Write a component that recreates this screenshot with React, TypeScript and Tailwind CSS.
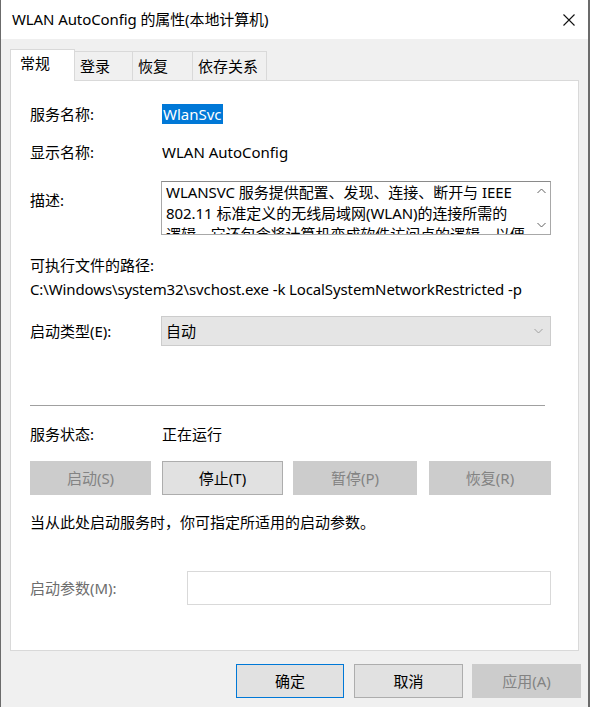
import React from "react";

const FONT = '"Noto Sans", "Noto Sans CJK SC", sans-serif';

function Chevron({ up, className }: { up?: boolean; className?: string }) {
  return (
    <svg width="9" height="6" viewBox="0 0 9 6" className={className}>
      <path
        d={up ? "M0.5 5 L4.5 1 L8.5 5" : "M0.5 1 L4.5 5 L8.5 1"}
        fill="none"
        stroke="currentColor"
        strokeWidth="1"
      />
    </svg>
  );
}

function Tab({ label, active, w }: { label: string; active?: boolean; w: string }) {
  if (active) {
    return (
      <div
        className={`${w} h-[32px] -mb-px relative z-10 bg-white border border-b-0 border-[#d9d9d9] pl-[9px] pb-[4px] flex items-center text-[15px]`}
      >
        {label}
      </div>
    );
  }
  return (
    <div
      className={`${w} h-[29px] bg-[#f0f0f0] border border-l-0 border-b-0 border-[#d9d9d9] pl-[5px] flex items-center text-[15px]`}
    >
      {label}
    </div>
  );
}

function SvcButton({
  label,
  disabled,
  className,
}: {
  label: string;
  disabled?: boolean;
  className: string;
}) {
  return (
    <div
      className={`${className} h-[34px] flex items-center justify-center text-[15px] border ${
        disabled
          ? "bg-[#cccccc] border-[#cccccc] text-[#838383]"
          : "bg-[#e1e1e1] border-[#adadad] text-black"
      }`}
    >
      {label}
    </div>
  );
}

export default function App() {
  return (
    <div
      className="w-[590px] h-[707px] bg-[#f0f0f0] border-l border-r-2 border-[#6b6b6b] flex flex-col text-black overflow-hidden"
      style={{ fontFamily: FONT }}
    >
      {/* title bar */}
      <div className="h-[39px] shrink-0 bg-white flex items-center justify-between pl-[11px] pr-[13px]">
        <span className="text-[15px] leading-none tracking-[-0.1px]">WLAN AutoConfig 的属性(本地计算机)</span>
        <svg width="12" height="12" viewBox="0 0 12 12">
          <path d="M0.5 0.5 L11.5 11.5 M11.5 0.5 L0.5 11.5" stroke="#111" strokeWidth="1.1" />
        </svg>
      </div>

      {/* tabs */}
      <div className="pl-[9px] pt-[10px] flex items-end">
        <Tab label="常规" active w="w-[65px]" />
        <Tab label="登录" w="w-[58px]" />
        <Tab label="恢复" w="w-[60px]" />
        <Tab label="依存关系" w="w-[74px]" />
      </div>

      {/* general page */}
      <div className="ml-[9px] mr-[9px] h-[571px] bg-white border border-[#d9d9d9] pl-[19px] pr-[26px] text-[15px] flex flex-col">
        <div className="mt-[21px] h-[24px] flex items-center">
          <span className="w-[132px]">服务名称:</span>
          <span className="bg-[#0078d7] text-white px-[1px] leading-[20px]">WlanSvc</span>
        </div>
        <div className="mt-[14px] h-[24px] flex items-center">
          <span className="w-[132px]">显示名称:</span>
          <span>WLAN AutoConfig</span>
        </div>
        <div className="mt-[17px] flex items-start">
          <span className="w-[131px] mt-[7px] h-[24px] flex items-center">描述:</span>
          <div className="w-[390px] h-[54px] border border-[#a8a8a8] border-t-[#8a8a8a] flex overflow-hidden">
            <div className="flex-1 pl-[4px] leading-[21px] overflow-hidden tracking-[-0.05px]">
              <div>WLANSVC 服务提供配置、发现、连接、断开与 IEEE</div>
              <div>802.11 标准定义的无线局域网(WLAN)的连接所需的</div>
              <div>逻辑。它还包含将计算机变成软件访问点的逻辑，以便</div>
            </div>
            <div className="w-[18px] flex flex-col items-center justify-between py-[6px] text-[#606060]">
              <Chevron up />
              <Chevron />
            </div>
          </div>
        </div>
        <div className="mt-[18px] h-[24px] flex items-center">可执行文件的路径:</div>
        <div className="h-[24px] flex items-center tracking-[-0.12px]">
          C:\Windows\system32\svchost.exe -k LocalSystemNetworkRestricted -p
        </div>
        <div className="mt-[15px] flex items-center">
          <span className="w-[131px]">启动类型(E):</span>
          <div className="w-[390px] h-[30px] bg-[#e5e5e5] border border-[#cccccc] flex items-center justify-between pl-[4px] pr-[7px]">
            <span>自动</span>
            <Chevron className="text-[#a0a0a0]" />
          </div>
        </div>
        <div className="mt-[59px] h-px w-[515px] bg-[#a0a0a0]" />
        <div className="mt-[16px] h-[24px] flex items-center">
          <span className="w-[132px]">服务状态:</span>
          <span>正在运行</span>
        </div>
        <div className="mt-[15px] flex">
          <SvcButton label="启动(S)" disabled className="w-[121px]" />
          <SvcButton label="停止(T)" className="w-[121px] ml-[11px]" />
          <SvcButton label="暂停(P)" disabled className="w-[124px] ml-[10px]" />
          <SvcButton label="恢复(R)" disabled className="w-[122px] ml-[12px]" />
        </div>
        <div className="mt-[15px] h-[24px] flex items-center">
          当从此处启动服务时，你可指定所适用的启动参数。
        </div>
        <div className="mt-[37px] flex items-center">
          <span className="w-[157px] text-[#6d6d6d]">启动参数(M):</span>
          <div className="w-[364px] h-[34px] border border-[#d9d9d9] bg-white" />
        </div>
      </div>

      {/* dialog buttons */}
      <div className="mt-[13px] flex justify-end pr-[7px]">
        <div className="w-[108px] h-[34px] bg-[#e1e1e1] border border-[#0078d7] flex items-center justify-center text-[15px]">
          确定
        </div>
        <div className="w-[109px] h-[34px] ml-[10px] bg-[#e1e1e1] border border-[#adadad] flex items-center justify-center text-[15px]">
          取消
        </div>
        <div className="w-[109px] h-[34px] ml-[9px] bg-[#cccccc] border border-[#cccccc] text-[#838383] flex items-center justify-center text-[15px]">
          应用(A)
        </div>
      </div>
    </div>
  );
}
